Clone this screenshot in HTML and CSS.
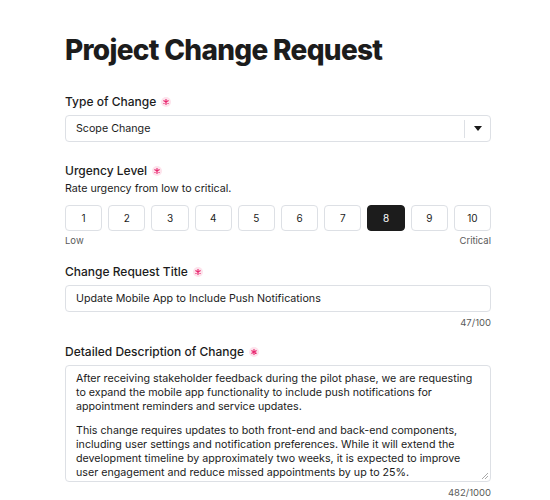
FILE: index.html
```html
<!DOCTYPE html>
<html>
<head>
    <meta charset="UTF-8">
    <meta name="viewport" content="width=device-width, initial-scale=1.0">
    <title>Project Change Request</title>
    <link rel="stylesheet" href="styles.css">
</head>
<body>
    <div class="form">
        <h1 class="title">Project Change Request</h1>

        <div class="field">
            <div class="label">Type of Change <span class="req"><svg width="6" height="6" viewBox="0 0 6 6"><path d="M3 0 V6 M0.4 1.5 L5.6 4.5 M0.4 4.5 L5.6 1.5" stroke="#e8266f" stroke-width="1.1"/></svg></span></div>
            <div class="select">
                <div class="select-value">Scope Change</div>
                <div class="select-arrow">
                    <svg width="8" height="5" viewBox="0 0 8 5"><path d="M0 0 L8 0 L4 5 Z" fill="#1a1a1a"/></svg>
                </div>
            </div>
        </div>

        <div class="field short">
            <div class="label">Urgency Level <span class="req"><svg width="6" height="6" viewBox="0 0 6 6"><path d="M3 0 V6 M0.4 1.5 L5.6 4.5 M0.4 4.5 L5.6 1.5" stroke="#e8266f" stroke-width="1.1"/></svg></span></div>
            <div class="hint">Rate urgency from low to critical.</div>
            <div class="scale">
                <div class="scale-btn">1</div>
                <div class="scale-btn">2</div>
                <div class="scale-btn">3</div>
                <div class="scale-btn">4</div>
                <div class="scale-btn">5</div>
                <div class="scale-btn">6</div>
                <div class="scale-btn">7</div>
                <div class="scale-btn active">8</div>
                <div class="scale-btn">9</div>
                <div class="scale-btn">10</div>
            </div>
            <div class="scale-labels">
                <span>Low</span>
                <span>Critical</span>
            </div>
        </div>

        <div class="field counted">
            <div class="label">Change Request Title <span class="req"><svg width="6" height="6" viewBox="0 0 6 6"><path d="M3 0 V6 M0.4 1.5 L5.6 4.5 M0.4 4.5 L5.6 1.5" stroke="#e8266f" stroke-width="1.1"/></svg></span></div>
            <div class="input">Update Mobile App to Include Push Notifications</div>
            <div class="counter">47/100</div>
        </div>

        <div class="field counted">
            <div class="label">Detailed Description of Change <span class="req"><svg width="6" height="6" viewBox="0 0 6 6"><path d="M3 0 V6 M0.4 1.5 L5.6 4.5 M0.4 4.5 L5.6 1.5" stroke="#e8266f" stroke-width="1.1"/></svg></span></div>
            <div class="textarea">
                <p>After receiving stakeholder feedback during the pilot phase, we are requesting to expand the mobile app functionality to include push notifications for appointment reminders and service updates.</p>
                <p>This change requires updates to both front-end and back-end components, including user settings and notification preferences. While it will extend the development timeline by approximately two weeks, it is expected to improve user engagement and reduce missed appointments by up to 25%.</p>
                <svg class="grip" width="7" height="7" viewBox="0 0 7 7"><path d="M7 1 L1 7 M7 4 L4 7" stroke="#aaa" stroke-width="1"/></svg>
            </div>
            <div class="counter">482/1000</div>
        </div>
    </div>
</body>
</html>
```

FILE: styles.css
```css
:root {
    --text: #1c1c1c;
    --muted: #5a5a5a;
    --border: #dde0e5;
    --pink: #e8266f;
}
body {
    margin: 0;
    font-family: 'Inter', 'Liberation Sans', sans-serif;
    color: var(--text);
    background: #fff;
}
.form {
    width: 426px;
    margin-left: 65px;
    padding-top: 30px;
}
.title {
    font-size: 28px;
    font-weight: 800;
    letter-spacing: -0.7px;
    margin: 0 0 24px 0;
    line-height: 40px;
}
.field {
    margin-bottom: 21px;
}
.field.short {
    margin-bottom: 17px;
}
.field.counted {
    margin-bottom: 15px;
}
.label {
    font-size: 12px;
    font-weight: 500;
    line-height: 16px;
    margin-bottom: 5px;
    display: flex;
    align-items: center;
}
.req {
    display: inline-flex;
    align-items: center;
    justify-content: center;
    width: 10px;
    height: 10px;
    margin-left: 5px;
    border-radius: 50%;
    background: #fde3ec;
}
.hint {
    font-size: 10.7px;
    line-height: 16px;
    margin: -3px 0 8px 0;
}
.select {
    display: flex;
    align-items: center;
    height: 27px;
    border: 1px solid var(--border);
    border-radius: 4px;
    box-sizing: border-box;
    font-size: 10.7px;
}
.select-value {
    flex: 1;
    padding-left: 10px;
}
.select-arrow {
    width: 25px;
    height: 18px;
    border-left: 1px solid var(--border);
    display: flex;
    align-items: center;
    justify-content: center;
}
.scale {
    display: flex;
    gap: 6px;
}
.scale-btn {
    flex: 1;
    height: 26px;
    border: 1px solid var(--border);
    border-radius: 4px;
    display: flex;
    align-items: center;
    justify-content: center;
    font-size: 10px;
    box-sizing: border-box;
}
.scale-btn.active {
    background: #1c1c1c;
    border-color: #1c1c1c;
    color: #fff;
}
.scale-labels {
    display: flex;
    justify-content: space-between;
    font-size: 9.5px;
    line-height: 12px;
    color: var(--muted);
    margin-top: 4px;
}
.input {
    height: 27px;
    border: 1px solid var(--border);
    border-radius: 4px;
    box-sizing: border-box;
    font-size: 10.7px;
    padding-left: 10px;
    display: flex;
    align-items: center;
}
.counter {
    text-align: right;
    font-size: 9.5px;
    line-height: 12px;
    color: var(--muted);
    margin-top: 5px;
}
.textarea {
    position: relative;
    height: 117px;
    box-sizing: border-box;
    border: 1px solid var(--border);
    border-radius: 4px;
    padding: 6px 10px 0 10px;
    font-size: 10.7px;
    line-height: 14px;
}
.textarea p {
    margin: 0 0 10px 0;
}
.textarea p:last-of-type {
    margin-bottom: 0;
}
.grip {
    position: absolute;
    right: 2px;
    bottom: 2px;
}
```
